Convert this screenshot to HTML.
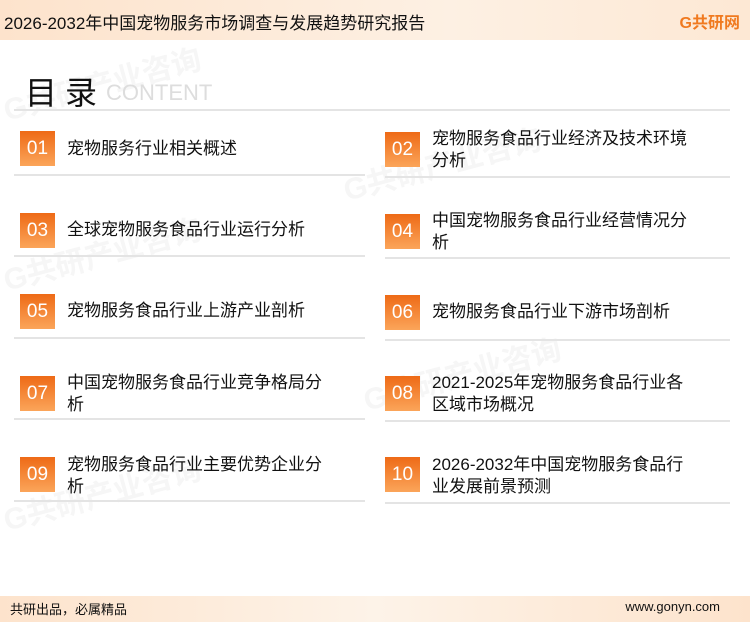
<!DOCTYPE html><html><head><meta charset="utf-8"><style>
*{margin:0;padding:0;box-sizing:border-box}
body{width:750px;height:622px;position:relative;background:#fff;font-family:"Liberation Sans","Noto Sans CJK SC",sans-serif;overflow:hidden;color:#111}
.hd{position:absolute;left:0;top:0;width:750px;height:40px;background:linear-gradient(90deg,#fde3cc,#fdf0e3 60%,#fde8d4);}
.hd .t{position:absolute;left:4px;top:9px;font-size:17px;color:#111}
.logo{position:absolute;right:10px;top:9px;font-size:16px;font-weight:bold;color:#f07a20}
.ft{position:absolute;left:0;top:596px;width:750px;height:26px;background:linear-gradient(90deg,#fde3cc,#fdf3e8 50%,#fde3cc)}
.ft .a{position:absolute;left:10px;top:3px;font-size:13px}
.ft .b{position:absolute;right:30px;top:3px;font-size:13px}
.ttl{position:absolute;left:25px;top:68px;font-size:32px;letter-spacing:8px}
.ct{position:absolute;left:106px;top:80px;font-size:22px;color:#ddd}
.ln{position:absolute;height:2px;background:#e4e4e4}
.bx{position:absolute;width:35px;height:35px;background:linear-gradient(180deg,#ee6a16,#fba55a);color:#fff;font-size:19px;text-align:center;line-height:35px}
.tx{position:absolute;font-size:17px;line-height:22px;width:262px}
.wm{position:absolute;color:#f6f6f6;font-weight:bold;font-size:30px;transform:rotate(-15deg);white-space:nowrap}
</style></head><body>
<div class="wm" style="left:0;top:60px">G共研产业咨询</div>
<div class="wm" style="left:340px;top:140px">G共研产业咨询</div>
<div class="wm" style="left:0;top:230px">G共研产业咨询</div>
<div class="wm" style="left:360px;top:350px">G共研产业咨询</div>
<div class="wm" style="left:0;top:470px">G共研产业咨询</div>
<div class="hd"><div class="t">2026-2032年中国宠物服务市场调查与发展趋势研究报告</div><div class="logo">G共研网</div></div>
<div class="ttl">目录</div><div class="ct">CONTENT</div>
<div class="ln" style="left:14px;top:109px;width:716px"></div>

<div class="bx" style="left:20px;top:131px">01</div><div class="tx" style="left:67px;top:138px">宠物服务行业相关概述</div>
<div class="bx" style="left:385px;top:132px">02</div><div class="tx" style="left:432px;top:128px">宠物服务食品行业经济及技术环境分析</div>
<div class="ln" style="left:14px;top:174px;width:351px"></div><div class="ln" style="left:385px;top:176px;width:345px"></div>

<div class="bx" style="left:20px;top:213px">03</div><div class="tx" style="left:67px;top:219px">全球宠物服务食品行业运行分析</div>
<div class="bx" style="left:385px;top:214px">04</div><div class="tx" style="left:432px;top:210px">中国宠物服务食品行业经营情况分析</div>
<div class="ln" style="left:14px;top:255px;width:351px"></div><div class="ln" style="left:385px;top:257px;width:345px"></div>

<div class="bx" style="left:20px;top:294px">05</div><div class="tx" style="left:67px;top:300px">宠物服务食品行业上游产业剖析</div>
<div class="bx" style="left:385px;top:295px">06</div><div class="tx" style="left:432px;top:301px">宠物服务食品行业下游市场剖析</div>
<div class="ln" style="left:14px;top:337px;width:351px"></div><div class="ln" style="left:385px;top:339px;width:345px"></div>

<div class="bx" style="left:20px;top:376px">07</div><div class="tx" style="left:67px;top:372px">中国宠物服务食品行业竞争格局分析</div>
<div class="bx" style="left:385px;top:376px">08</div><div class="tx" style="left:432px;top:372px">2021-2025年宠物服务食品行业各区域市场概况</div>
<div class="ln" style="left:14px;top:418px;width:351px"></div><div class="ln" style="left:385px;top:420px;width:345px"></div>

<div class="bx" style="left:20px;top:457px">09</div><div class="tx" style="left:67px;top:454px">宠物服务食品行业主要优势企业分析</div>
<div class="bx" style="left:385px;top:457px">10</div><div class="tx" style="left:432px;top:454px">2026-2032年中国宠物服务食品行业发展前景预测</div>
<div class="ln" style="left:14px;top:500px;width:351px"></div><div class="ln" style="left:385px;top:502px;width:345px"></div>

<div class="ft"><div class="a">共研出品，必属精品</div><div class="b">www.gonyn.com</div></div>
</body></html>
